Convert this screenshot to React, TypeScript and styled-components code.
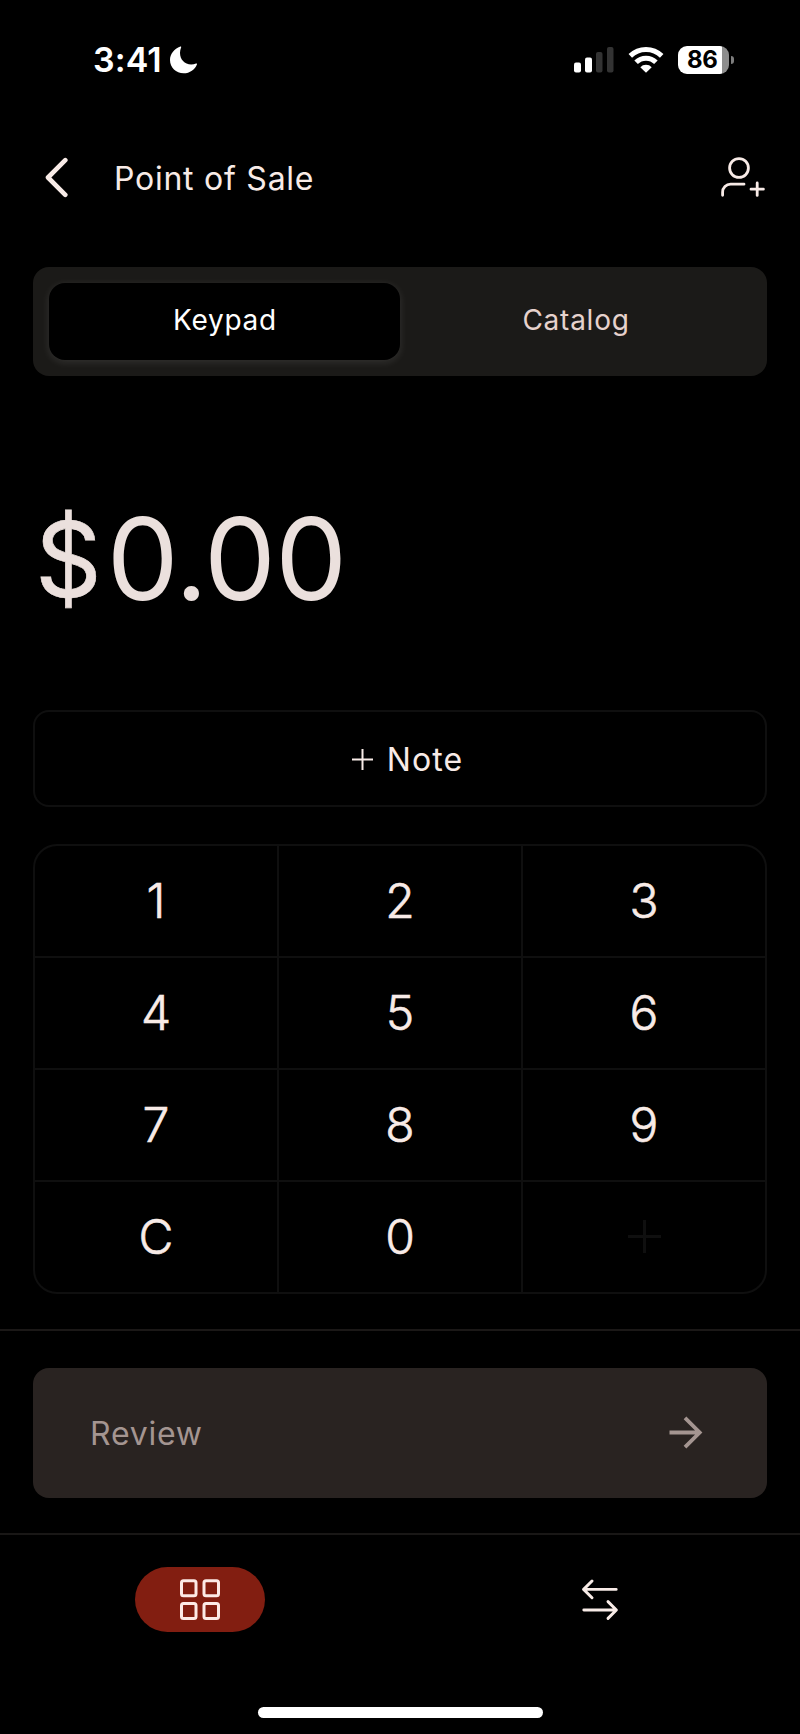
import React, { useState } from "react";
import styled, { createGlobalStyle } from "styled-components";

const GlobalStyle = createGlobalStyle`
  *, *::before, *::after { box-sizing: border-box; }
  body { margin: 0; background: #000; }
  button { font: inherit; color: inherit; background: none; border: 0; padding: 0; margin: 0; }
  svg { display: block; }
`;

const ink = "#f8ebe7";
const line = "#0f0f0f";

const Screen = styled.div`
  display: flex;
  flex-direction: column;
  width: 800px;
  height: 1734px;
  background: #000;
  color: ${ink};
  font-family: Inter, "Liberation Sans", sans-serif;
  overflow: hidden;
`;

const StatusBar = styled.div`
  display: flex;
  align-items: center;
  height: 120px;
  padding: 0 66px 0 93px;
  color: #fff;
`;

const Time = styled.span`
  width: 77px;
  font-size: 34px;
  font-weight: 570;
  line-height: 40px;
  letter-spacing: 0.1px;
  white-space: nowrap;
`;

const StatusIcons = styled.div`
  display: flex;
  align-items: center;
  margin-left: auto;
`;

const BatteryWrap = styled.div`
  display: flex;
  align-items: center;
  margin-left: 14px;
`;

const Battery = styled.div`
  width: 51px;
  height: 28px;
  border-radius: 9px;
  background: linear-gradient(90deg, #fff 44px, #8d8d8d 44px);
  color: #000;
  font-size: 24px;
  font-weight: 700;
  line-height: 28px;
  padding-left: 9px;
  letter-spacing: -0.3px;
`;

const BatteryTip = styled.div`
  width: 3px;
  height: 8px;
  margin-left: 2px;
  border-radius: 0 4px 4px 0;
  background: #7d7d7d;
`;

const Header = styled.header`
  display: flex;
  align-items: center;
  height: 116px;
  padding: 0 34px 0 43px;
`;

const Title = styled.h1`
  margin: 0 auto 0 43px;
  padding-top: 1px;
  font-size: 32px;
  font-weight: 400;
  line-height: 40px;
  letter-spacing: 0.75px;
`;

const Tabs = styled.div`
  display: grid;
  grid-template-columns: 1fr 1fr;
  flex: none;
  height: 109px;
  margin: 31px 33px 0;
  padding: 16px;
  border-radius: 16px;
  background: #1b1a18;
`;

const Tab = styled.button<{ $active?: boolean }>`
  height: 77px;
  border-radius: 16px;
  padding: 0 0 3px 1px;
  font-size: 28px;
  letter-spacing: 0.75px;
  color: ${(p) => (p.$active ? "#fff" : "#e6d2cd")};
  background: ${(p) => (p.$active ? "#000" : "transparent")};
  box-shadow: ${(p) => (p.$active ? "0 2px 8px rgba(255, 255, 255, 0.11)" : "none")};
`;

const Amount = styled.div`
  height: 334px;
  padding: 113px 0 0 35px;
  font-size: 114px;
  line-height: 140px;
  letter-spacing: -0.8px;
  color: #ebe0dd;
`;

const Currency = styled.span`
  font-size: 104px;
  line-height: 1;
  vertical-align: 3px;
  letter-spacing: 5px;
  -webkit-text-stroke: 0.6px #ebe0dd;
`;

const NoteButton = styled.button`
  display: flex;
  align-items: center;
  justify-content: center;
  flex: none;
  gap: 14px;
  height: 97px;
  margin: 0 33px;
  padding: 1px 0 0 15px;
  border: 2px solid ${line};
  border-radius: 16px;
  font-size: 32px;
  letter-spacing: 1.1px;
`;

const Keypad = styled.div`
  display: grid;
  grid-template-columns: repeat(3, 242px);
  grid-template-rows: repeat(4, 110px);
  gap: 2px;
  flex: none;
  height: 450px;
  margin: 37px 33px 0;
  border: 2px solid ${line};
  border-radius: 24px;
  background: ${line};
  overflow: hidden;
`;

const Key = styled.button`
  display: flex;
  align-items: center;
  justify-content: center;
  padding-bottom: 1px;
  background: #000;
  font-size: 48px;
  font-weight: 300;
  line-height: 58px;
  -webkit-text-stroke: 0.6px ${ink};
`;

const ReviewPanel = styled.div`
  flex: none;
  height: 204px;
  margin-top: 35px;
  padding: 37px 33px 0;
  border-top: 2px solid #1b1817;
`;

const ReviewButton = styled.button`
  display: flex;
  align-items: center;
  justify-content: space-between;
  width: 100%;
  height: 130px;
  padding: 0 64px 0 57px;
  border-radius: 16px;
  background: #292321;
  color: #a49591;
  font-size: 32px;
  letter-spacing: 0.75px;
`;

const BottomNav = styled.nav`
  display: grid;
  grid-template-columns: 1fr 1fr;
  justify-items: center;
  flex: none;
  height: 174px;
  padding-top: 32px;
  border-top: 2px solid #191716;
`;

const NavItem = styled.button<{ $active?: boolean }>`
  display: flex;
  align-items: center;
  justify-content: center;
  width: 130px;
  height: 65px;
  border-radius: 33px;
  background: ${(p) => (p.$active ? "#821e11" : "transparent")};
`;

const HomeIndicator = styled.div`
  flex: none;
  width: 285px;
  height: 11px;
  margin: 0 auto;
  border-radius: 6px;
  background: #fff;
`;

const Moon = () => (
  <svg width="28" height="28" viewBox="0 0 28 28">
    <path
      d="M10.400 0.600C4 3 0 8.200 0 14C0 21.500 6 27.300 13.700 27.300C19.800 27.300 25 23.500 27 18.200C27.200 17.600 26.600 17.200 26 17.500C24.500 18.200 23 18.500 21.200 18.500C14.500 18.500 10 13.500 10 6.800C10 4.900 10.500 3.200 11.100 1.600C11.400 0.900 11 0.400 10.400 0.600Z"
      fill="#fff"
    />
  </svg>
);

const Signal = () => (
  <svg width="40" height="26" viewBox="0 0 40 26">
    <rect x="0" y="15.500" width="7" height="10" rx="2" fill="#fff" />
    <rect x="11" y="10.500" width="7" height="15" rx="2" fill="#fff" />
    <rect x="22" y="5" width="6.500" height="20.500" rx="2" fill="#333" />
    <rect x="33" y="0" width="6.500" height="25.500" rx="2" fill="#333" />
  </svg>
);

const WifiWrap = styled.div`
  margin-left: 14px;
`;

const Wifi = () => (
  <svg width="36" height="26" viewBox="0 0 36 26" fill="none" stroke="#fff" strokeWidth="5">
    <path d="M2.300 8.900A22.500 22.500 0 0 1 33.700 8.900" />
    <path d="M8.100 15.200A14.100 14.100 0 0 1 27.900 15.200" />
    <path d="M12.300 20.200A8 8 0 0 1 23.700 20.200L18 25.800Z" fill="#fff" stroke="none" />
  </svg>
);

const Back = () => (
  <svg width="28" height="42" viewBox="0 0 28 42" fill="none" stroke={ink} strokeWidth="4.600" strokeLinecap="round" strokeLinejoin="round">
    <path d="M22.300 3.200L5 20.500L22.300 37.800" />
  </svg>
);

const AddPerson = () => (
  <svg width="46" height="42" viewBox="0 0 46 42" fill="none" stroke={ink} strokeWidth="2.800" strokeLinecap="round">
    <circle cx="19" cy="11" r="9.400" />
    <path d="M2.600 38.300V35.200A8 8 0 0 1 10.600 27.200H24" />
    <path d="M31 32.200H43.400M37.200 26V38.400" />
  </svg>
);

const Plus = ({ size, weight, color }: { size: number; weight: number; color: string }) => (
  <svg width={size} height={size} viewBox={`0 0 ${size} ${size}`} stroke={color} strokeWidth={weight}>
    <path d={`M0 ${size / 2}H${size}M${size / 2} 0V${size}`} />
  </svg>
);

const ArrowRight = () => (
  <svg width="34" height="34" viewBox="0 0 34 34" fill="none" stroke="#a49591" strokeWidth="3.800">
    <path d="M0.500 16.500H30.500M16 1.800L30.700 16.500L16 31.200" />
  </svg>
);

const GridIcon = () => (
  <svg width="42" height="42" viewBox="0 0 42 42" fill="none" stroke="#fdeae6" strokeWidth="3">
    <rect x="2.500" y="1.800" width="14.500" height="15" rx="2" />
    <rect x="25" y="1.800" width="14.500" height="15" rx="2" />
    <rect x="2.500" y="24.500" width="14.500" height="15" rx="2" />
    <rect x="25" y="24.500" width="14.500" height="15" rx="2" />
  </svg>
);

const Transfer = () => (
  <svg width="40" height="42" viewBox="0 0 40 42" fill="none" stroke={ink} strokeWidth="2.900" strokeLinecap="round" strokeLinejoin="round">
    <path d="M36.200 10.400H3.800M12 2L3.600 10.400L12 18.800" />
    <path d="M3.800 31H36.200M28 22.600L36.400 31L28 39.400" />
  </svg>
);

const keys = ["1", "2", "3", "4", "5", "6", "7", "8", "9", "C", "0"];

export default function App() {
  const [tab, setTab] = useState("Keypad");
  return (
    <>
      <GlobalStyle />
      <Screen>
        <StatusBar>
          <Time>3:41</Time>
          <Moon />
          <StatusIcons>
            <Signal />
            <WifiWrap><Wifi /></WifiWrap>
            <BatteryWrap>
              <Battery>86</Battery>
              <BatteryTip />
            </BatteryWrap>
          </StatusIcons>
        </StatusBar>
        <Header>
          <button aria-label="Back"><Back /></button>
          <Title>Point of Sale</Title>
          <button aria-label="Add customer"><AddPerson /></button>
        </Header>
        <Tabs>
          {["Keypad", "Catalog"].map((name) => (
            <Tab key={name} $active={tab === name} onClick={() => setTab(name)}>{name}</Tab>
          ))}
        </Tabs>
        <Amount><Currency>$</Currency>0.00</Amount>
        <NoteButton>
          <Plus size={21} weight={2} color={ink} />
          Note
        </NoteButton>
        <Keypad>
          {keys.map((k) => <Key key={k}>{k}</Key>)}
          <Key aria-label="Add"><Plus size={33} weight={3} color={line} /></Key>
        </Keypad>
        <ReviewPanel>
          <ReviewButton>
            Review
            <ArrowRight />
          </ReviewButton>
        </ReviewPanel>
        <BottomNav>
          <NavItem $active aria-label="Checkout"><GridIcon /></NavItem>
          <NavItem aria-label="Transactions"><Transfer /></NavItem>
        </BottomNav>
        <HomeIndicator />
      </Screen>
    </>
  );
}
